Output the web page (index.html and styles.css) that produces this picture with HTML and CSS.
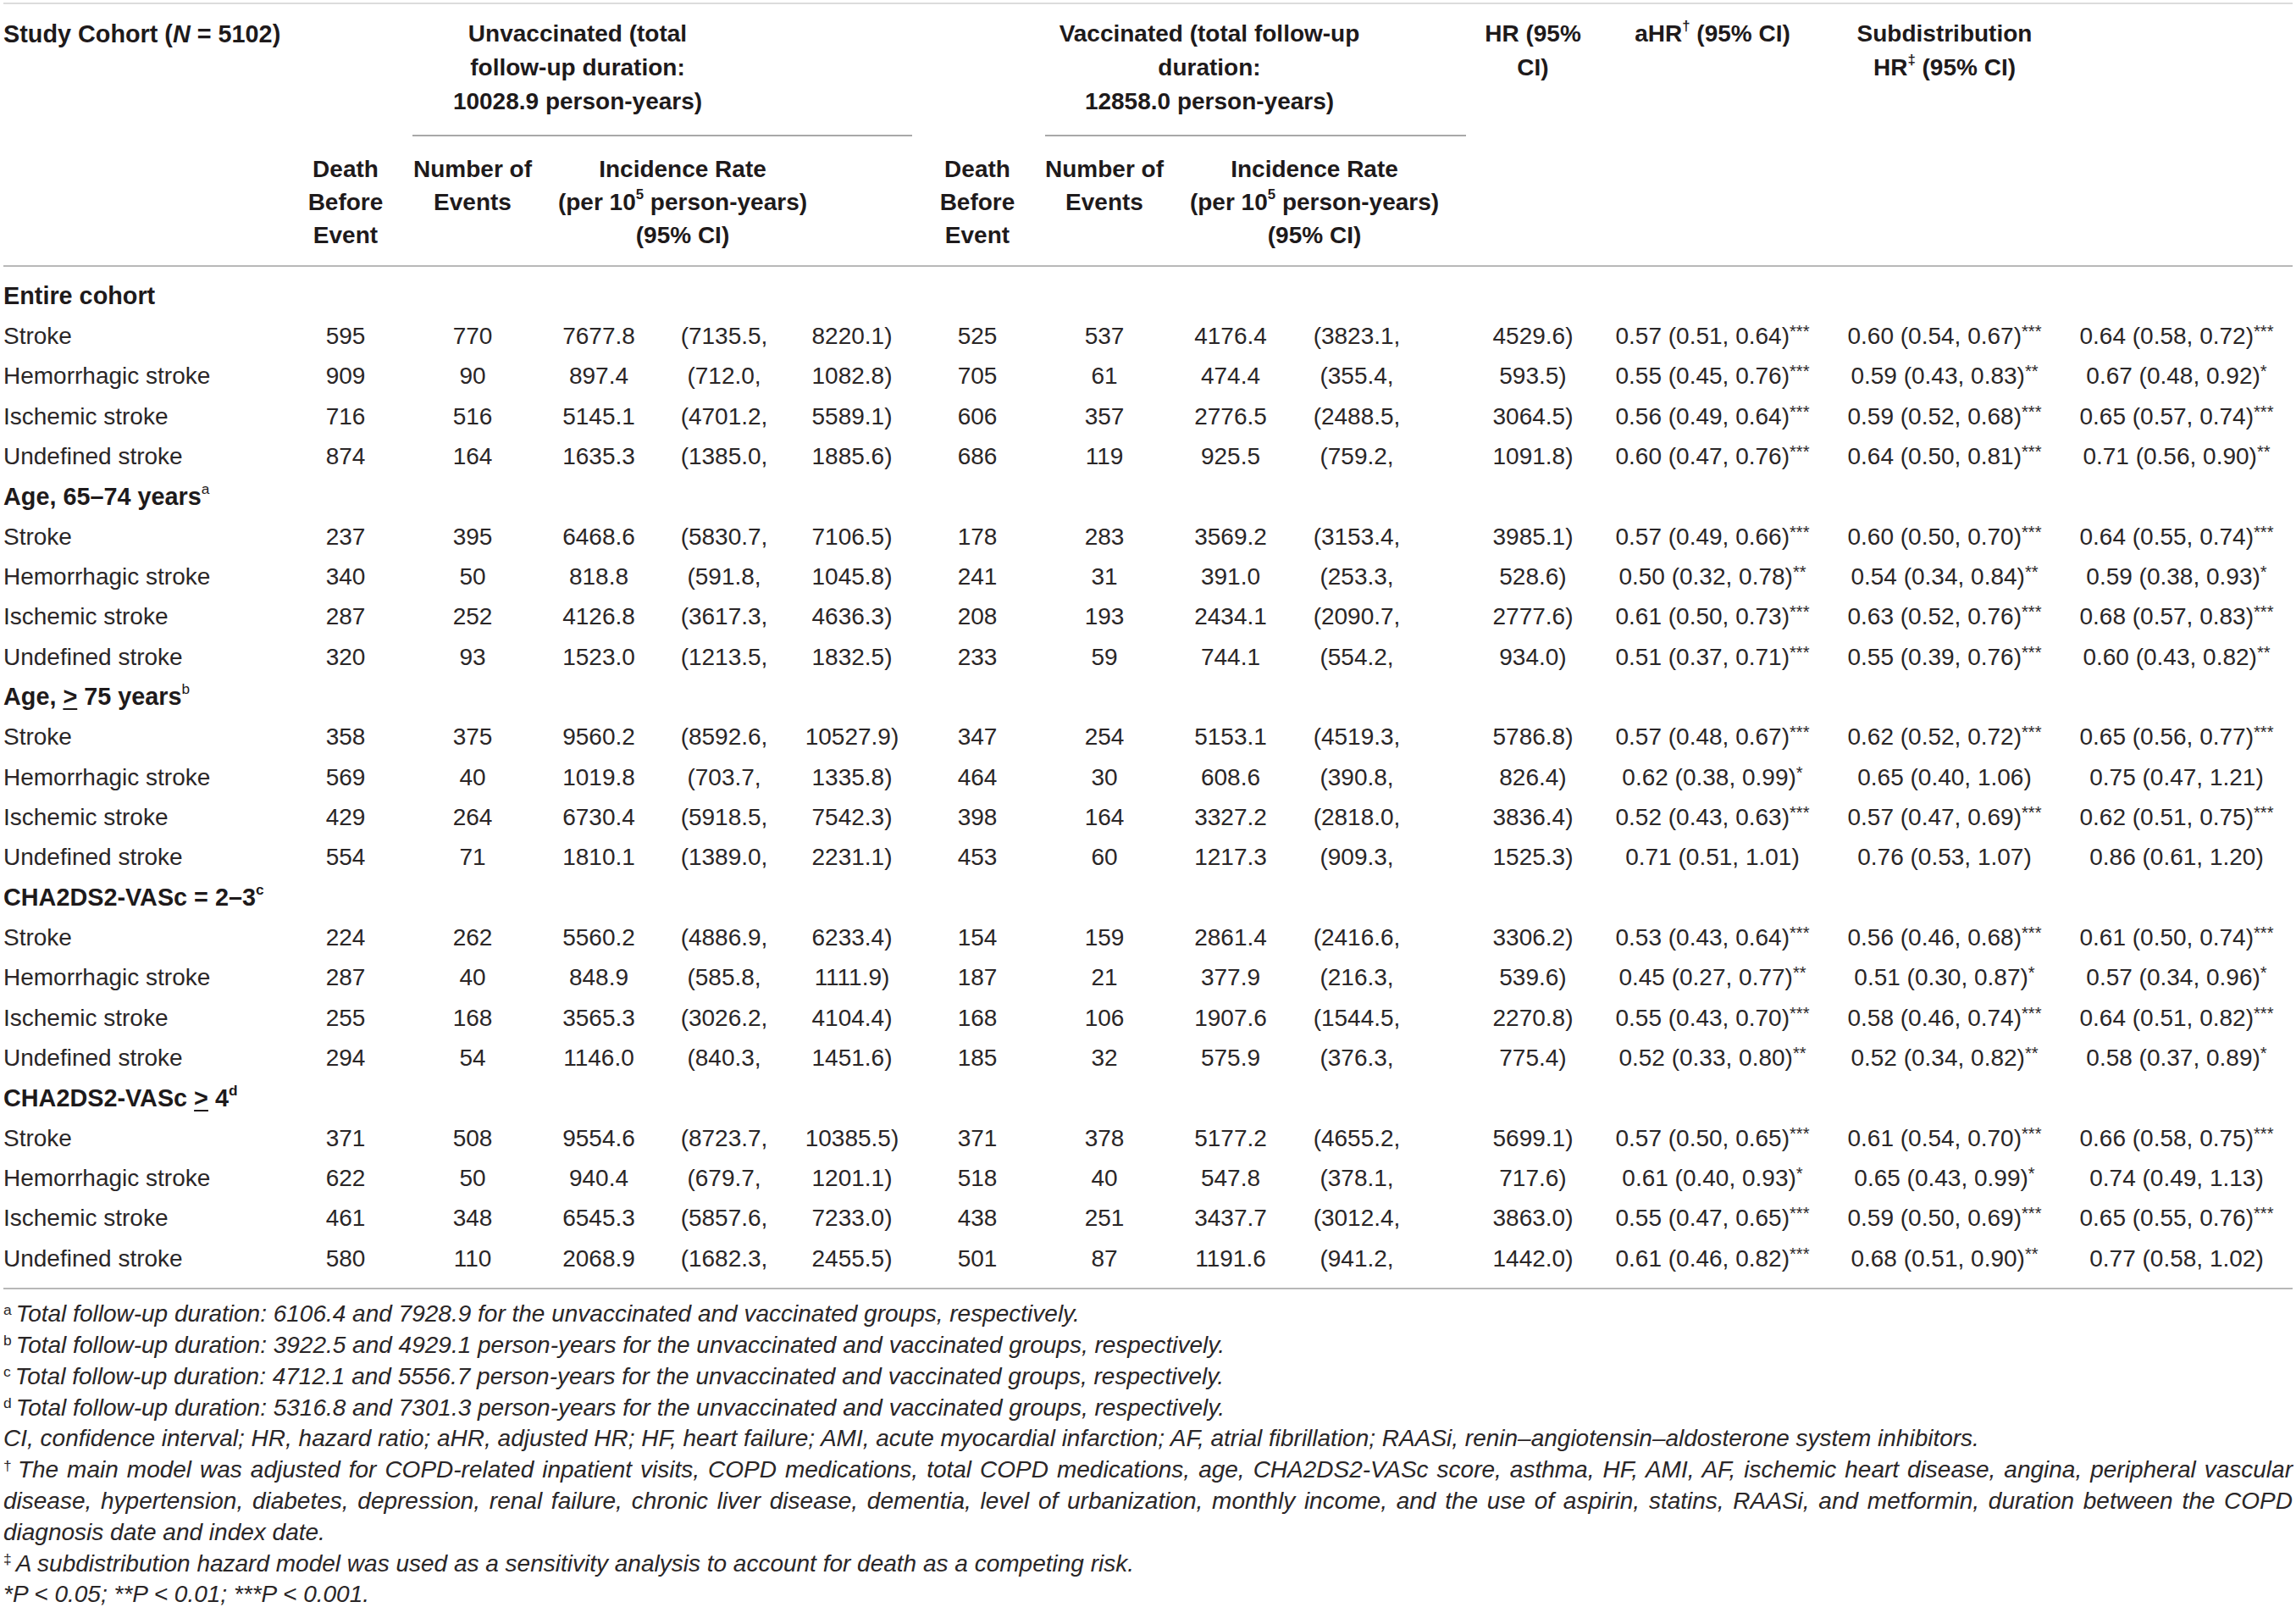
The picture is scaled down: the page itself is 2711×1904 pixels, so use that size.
FILE: index.html
```html
<!DOCTYPE html>
<html lang="en">
<head>
<meta charset="utf-8">
<title>Stroke incidence by influenza vaccination status</title>
<link rel="stylesheet" href="styles.css">
</head>
<body>
<div class="page">
  <div class="tbl">
    <div class="grid thead">
      <div class="h1 lab"><span>Study Cohort (<i>N</i> = 5102)</span></div>
      <div class="h1 u-head"><span>Unvaccinated (total<br>follow-up duration:<br>10028.9 person-years)</span></div>
      <div class="h1 v-head"><span>Vaccinated (total follow-up<br>duration:<br>12858.0 person-years)</span></div>
      <div class="h1 hr-head"><span>HR (95%<br>CI)</span></div>
      <div class="h1 ahr-head"><span>aHR<sup>†</sup> (95% CI)</span></div>
      <div class="h1 sub-head"><span>Subdistribution<br>HR<sup>‡</sup> (95% CI)</span></div>
      <div class="rule rule-u"></div>
      <div class="rule rule-v"></div>
      <div class="h2 du"><span>Death<br>Before<br>Event</span></div>
      <div class="h2 nu"><span>Number of<br>Events</span></div>
      <div class="h2 iru"><span>Incidence Rate<br>(per 10<sup>5</sup> person-years)<br>(95% CI)</span></div>
      <div class="h2 dv"><span>Death<br>Before<br>Event</span></div>
      <div class="h2 nv"><span>Number of<br>Events</span></div>
      <div class="h2 irv"><span>Incidence Rate<br>(per 10<sup>5</sup> person-years)<br>(95% CI)</span></div>
    </div>

    <div class="grid tbody">
      <div class="sec"><span>Entire cohort</span></div>
      <div class="c l">Stroke</div><div class="c">595</div><div class="c">770</div><div class="c">7677.8</div><div class="c">(7135.5,</div><div class="c">8220.1)</div><div class="c">525</div><div class="c">537</div><div class="c">4176.4</div><div class="c">(3823.1,</div><div class="c">4529.6)</div><div class="c"><span>0.57 (0.51, 0.64)<sup class="st">***</sup></span></div><div class="c"><span>0.60 (0.54, 0.67)<sup class="st">***</sup></span></div><div class="c"><span>0.64 (0.58, 0.72)<sup class="st">***</sup></span></div><div></div>
      <div class="c l">Hemorrhagic stroke</div><div class="c">909</div><div class="c">90</div><div class="c">897.4</div><div class="c">(712.0,</div><div class="c">1082.8)</div><div class="c">705</div><div class="c">61</div><div class="c">474.4</div><div class="c">(355.4,</div><div class="c">593.5)</div><div class="c"><span>0.55 (0.45, 0.76)<sup class="st">***</sup></span></div><div class="c"><span>0.59 (0.43, 0.83)<sup class="st">**</sup></span></div><div class="c"><span>0.67 (0.48, 0.92)<sup class="st">*</sup></span></div><div></div>
      <div class="c l">Ischemic stroke</div><div class="c">716</div><div class="c">516</div><div class="c">5145.1</div><div class="c">(4701.2,</div><div class="c">5589.1)</div><div class="c">606</div><div class="c">357</div><div class="c">2776.5</div><div class="c">(2488.5,</div><div class="c">3064.5)</div><div class="c"><span>0.56 (0.49, 0.64)<sup class="st">***</sup></span></div><div class="c"><span>0.59 (0.52, 0.68)<sup class="st">***</sup></span></div><div class="c"><span>0.65 (0.57, 0.74)<sup class="st">***</sup></span></div><div></div>
      <div class="c l">Undefined stroke</div><div class="c">874</div><div class="c">164</div><div class="c">1635.3</div><div class="c">(1385.0,</div><div class="c">1885.6)</div><div class="c">686</div><div class="c">119</div><div class="c">925.5</div><div class="c">(759.2,</div><div class="c">1091.8)</div><div class="c"><span>0.60 (0.47, 0.76)<sup class="st">***</sup></span></div><div class="c"><span>0.64 (0.50, 0.81)<sup class="st">***</sup></span></div><div class="c"><span>0.71 (0.56, 0.90)<sup class="st">**</sup></span></div><div></div>

      <div class="sec"><span>Age, 65–74 years<sup class="lt">a</sup></span></div>
      <div class="c l">Stroke</div><div class="c">237</div><div class="c">395</div><div class="c">6468.6</div><div class="c">(5830.7,</div><div class="c">7106.5)</div><div class="c">178</div><div class="c">283</div><div class="c">3569.2</div><div class="c">(3153.4,</div><div class="c">3985.1)</div><div class="c"><span>0.57 (0.49, 0.66)<sup class="st">***</sup></span></div><div class="c"><span>0.60 (0.50, 0.70)<sup class="st">***</sup></span></div><div class="c"><span>0.64 (0.55, 0.74)<sup class="st">***</sup></span></div><div></div>
      <div class="c l">Hemorrhagic stroke</div><div class="c">340</div><div class="c">50</div><div class="c">818.8</div><div class="c">(591.8,</div><div class="c">1045.8)</div><div class="c">241</div><div class="c">31</div><div class="c">391.0</div><div class="c">(253.3,</div><div class="c">528.6)</div><div class="c"><span>0.50 (0.32, 0.78)<sup class="st">**</sup></span></div><div class="c"><span>0.54 (0.34, 0.84)<sup class="st">**</sup></span></div><div class="c"><span>0.59 (0.38, 0.93)<sup class="st">*</sup></span></div><div></div>
      <div class="c l">Ischemic stroke</div><div class="c">287</div><div class="c">252</div><div class="c">4126.8</div><div class="c">(3617.3,</div><div class="c">4636.3)</div><div class="c">208</div><div class="c">193</div><div class="c">2434.1</div><div class="c">(2090.7,</div><div class="c">2777.6)</div><div class="c"><span>0.61 (0.50, 0.73)<sup class="st">***</sup></span></div><div class="c"><span>0.63 (0.52, 0.76)<sup class="st">***</sup></span></div><div class="c"><span>0.68 (0.57, 0.83)<sup class="st">***</sup></span></div><div></div>
      <div class="c l">Undefined stroke</div><div class="c">320</div><div class="c">93</div><div class="c">1523.0</div><div class="c">(1213.5,</div><div class="c">1832.5)</div><div class="c">233</div><div class="c">59</div><div class="c">744.1</div><div class="c">(554.2,</div><div class="c">934.0)</div><div class="c"><span>0.51 (0.37, 0.71)<sup class="st">***</sup></span></div><div class="c"><span>0.55 (0.39, 0.76)<sup class="st">***</sup></span></div><div class="c"><span>0.60 (0.43, 0.82)<sup class="st">**</sup></span></div><div></div>

      <div class="sec"><span>Age, <u>&gt;</u> 75 years<sup class="lt">b</sup></span></div>
      <div class="c l">Stroke</div><div class="c">358</div><div class="c">375</div><div class="c">9560.2</div><div class="c">(8592.6,</div><div class="c">10527.9)</div><div class="c">347</div><div class="c">254</div><div class="c">5153.1</div><div class="c">(4519.3,</div><div class="c">5786.8)</div><div class="c"><span>0.57 (0.48, 0.67)<sup class="st">***</sup></span></div><div class="c"><span>0.62 (0.52, 0.72)<sup class="st">***</sup></span></div><div class="c"><span>0.65 (0.56, 0.77)<sup class="st">***</sup></span></div><div></div>
      <div class="c l">Hemorrhagic stroke</div><div class="c">569</div><div class="c">40</div><div class="c">1019.8</div><div class="c">(703.7,</div><div class="c">1335.8)</div><div class="c">464</div><div class="c">30</div><div class="c">608.6</div><div class="c">(390.8,</div><div class="c">826.4)</div><div class="c"><span>0.62 (0.38, 0.99)<sup class="st">*</sup></span></div><div class="c">0.65 (0.40, 1.06)</div><div class="c">0.75 (0.47, 1.21)</div><div></div>
      <div class="c l">Ischemic stroke</div><div class="c">429</div><div class="c">264</div><div class="c">6730.4</div><div class="c">(5918.5,</div><div class="c">7542.3)</div><div class="c">398</div><div class="c">164</div><div class="c">3327.2</div><div class="c">(2818.0,</div><div class="c">3836.4)</div><div class="c"><span>0.52 (0.43, 0.63)<sup class="st">***</sup></span></div><div class="c"><span>0.57 (0.47, 0.69)<sup class="st">***</sup></span></div><div class="c"><span>0.62 (0.51, 0.75)<sup class="st">***</sup></span></div><div></div>
      <div class="c l">Undefined stroke</div><div class="c">554</div><div class="c">71</div><div class="c">1810.1</div><div class="c">(1389.0,</div><div class="c">2231.1)</div><div class="c">453</div><div class="c">60</div><div class="c">1217.3</div><div class="c">(909.3,</div><div class="c">1525.3)</div><div class="c">0.71 (0.51, 1.01)</div><div class="c">0.76 (0.53, 1.07)</div><div class="c">0.86 (0.61, 1.20)</div><div></div>

      <div class="sec"><span>CHA2DS2-VASc = 2–3<sup>c</sup></span></div>
      <div class="c l">Stroke</div><div class="c">224</div><div class="c">262</div><div class="c">5560.2</div><div class="c">(4886.9,</div><div class="c">6233.4)</div><div class="c">154</div><div class="c">159</div><div class="c">2861.4</div><div class="c">(2416.6,</div><div class="c">3306.2)</div><div class="c"><span>0.53 (0.43, 0.64)<sup class="st">***</sup></span></div><div class="c"><span>0.56 (0.46, 0.68)<sup class="st">***</sup></span></div><div class="c"><span>0.61 (0.50, 0.74)<sup class="st">***</sup></span></div><div></div>
      <div class="c l">Hemorrhagic stroke</div><div class="c">287</div><div class="c">40</div><div class="c">848.9</div><div class="c">(585.8,</div><div class="c">1111.9)</div><div class="c">187</div><div class="c">21</div><div class="c">377.9</div><div class="c">(216.3,</div><div class="c">539.6)</div><div class="c"><span>0.45 (0.27, 0.77)<sup class="st">**</sup></span></div><div class="c"><span>0.51 (0.30, 0.87)<sup class="st">*</sup></span></div><div class="c"><span>0.57 (0.34, 0.96)<sup class="st">*</sup></span></div><div></div>
      <div class="c l">Ischemic stroke</div><div class="c">255</div><div class="c">168</div><div class="c">3565.3</div><div class="c">(3026.2,</div><div class="c">4104.4)</div><div class="c">168</div><div class="c">106</div><div class="c">1907.6</div><div class="c">(1544.5,</div><div class="c">2270.8)</div><div class="c"><span>0.55 (0.43, 0.70)<sup class="st">***</sup></span></div><div class="c"><span>0.58 (0.46, 0.74)<sup class="st">***</sup></span></div><div class="c"><span>0.64 (0.51, 0.82)<sup class="st">***</sup></span></div><div></div>
      <div class="c l">Undefined stroke</div><div class="c">294</div><div class="c">54</div><div class="c">1146.0</div><div class="c">(840.3,</div><div class="c">1451.6)</div><div class="c">185</div><div class="c">32</div><div class="c">575.9</div><div class="c">(376.3,</div><div class="c">775.4)</div><div class="c"><span>0.52 (0.33, 0.80)<sup class="st">**</sup></span></div><div class="c"><span>0.52 (0.34, 0.82)<sup class="st">**</sup></span></div><div class="c"><span>0.58 (0.37, 0.89)<sup class="st">*</sup></span></div><div></div>

      <div class="sec"><span>CHA2DS2-VASc <u>&gt;</u> 4<sup>d</sup></span></div>
      <div class="c l">Stroke</div><div class="c">371</div><div class="c">508</div><div class="c">9554.6</div><div class="c">(8723.7,</div><div class="c">10385.5)</div><div class="c">371</div><div class="c">378</div><div class="c">5177.2</div><div class="c">(4655.2,</div><div class="c">5699.1)</div><div class="c"><span>0.57 (0.50, 0.65)<sup class="st">***</sup></span></div><div class="c"><span>0.61 (0.54, 0.70)<sup class="st">***</sup></span></div><div class="c"><span>0.66 (0.58, 0.75)<sup class="st">***</sup></span></div><div></div>
      <div class="c l">Hemorrhagic stroke</div><div class="c">622</div><div class="c">50</div><div class="c">940.4</div><div class="c">(679.7,</div><div class="c">1201.1)</div><div class="c">518</div><div class="c">40</div><div class="c">547.8</div><div class="c">(378.1,</div><div class="c">717.6)</div><div class="c"><span>0.61 (0.40, 0.93)<sup class="st">*</sup></span></div><div class="c"><span>0.65 (0.43, 0.99)<sup class="st">*</sup></span></div><div class="c">0.74 (0.49, 1.13)</div><div></div>
      <div class="c l">Ischemic stroke</div><div class="c">461</div><div class="c">348</div><div class="c">6545.3</div><div class="c">(5857.6,</div><div class="c">7233.0)</div><div class="c">438</div><div class="c">251</div><div class="c">3437.7</div><div class="c">(3012.4,</div><div class="c">3863.0)</div><div class="c"><span>0.55 (0.47, 0.65)<sup class="st">***</sup></span></div><div class="c"><span>0.59 (0.50, 0.69)<sup class="st">***</sup></span></div><div class="c"><span>0.65 (0.55, 0.76)<sup class="st">***</sup></span></div><div></div>
      <div class="c l">Undefined stroke</div><div class="c">580</div><div class="c">110</div><div class="c">2068.9</div><div class="c">(1682.3,</div><div class="c">2455.5)</div><div class="c">501</div><div class="c">87</div><div class="c">1191.6</div><div class="c">(941.2,</div><div class="c">1442.0)</div><div class="c"><span>0.61 (0.46, 0.82)<sup class="st">***</sup></span></div><div class="c"><span>0.68 (0.51, 0.90)<sup class="st">**</sup></span></div><div class="c">0.77 (0.58, 1.02)</div><div></div>
    </div>
  </div>

  <div class="notes">
    <p><sup>a</sup>Total follow-up duration: 6106.4 and 7928.9 for the unvaccinated and vaccinated groups, respectively.</p>
    <p><sup>b</sup>Total follow-up duration: 3922.5 and 4929.1 person-years for the unvaccinated and vaccinated groups, respectively.</p>
    <p><sup>c</sup>Total follow-up duration: 4712.1 and 5556.7 person-years for the unvaccinated and vaccinated groups, respectively.</p>
    <p><sup>d</sup>Total follow-up duration: 5316.8 and 7301.3 person-years for the unvaccinated and vaccinated groups, respectively.</p>
    <p>CI, confidence interval; HR, hazard ratio; aHR, adjusted HR; HF, heart failure; AMI, acute myocardial infarction; AF, atrial fibrillation; RAASi, renin–angiotensin–aldosterone system inhibitors.</p>
    <p class="just"><sup>†</sup>The main model was adjusted for COPD-related inpatient visits, COPD medications, total COPD medications, age, CHA2DS2-VASc score, asthma, HF, AMI, AF, ischemic heart disease, angina, peripheral vascular disease, hypertension, diabetes, depression, renal failure, chronic liver disease, dementia, level of urbanization, monthly income, and the use of aspirin, statins, RAASi, and metformin, duration between the COPD diagnosis date and index date.</p>
    <p><sup>‡</sup>A subdistribution hazard model was used as a sensitivity analysis to account for death as a competing risk.</p>
    <p>*P &lt; 0.05; **P &lt; 0.01; ***P &lt; 0.001.</p>
  </div>
</div>
</body>
</html>
```

FILE: styles.css
```css
html, body {
  margin: 0;
  padding: 0;
  background: #ffffff;
}

body {
  font-family: "Liberation Sans", Arial, Helvetica, sans-serif;
  font-size: 28px;
  color: #231f20;
}

.page {
  padding: 0 4px;
}

.tbl {
  margin-top: 3px;
  border-top: 2px solid #dcdcdc;
}

.grid {
  display: grid;
  grid-template-columns: 329px 150px 150px 148px 148px 154px 142px 158px 140px 158px 258px 166px 382px 166px 54px;
}

/* ---------- header ---------- */
.thead {
  grid-template-rows: auto 2px auto;
  border-bottom: 2px solid #b8b8b8;
  font-weight: bold;
  color: #1e1a1b;
}

.h1 {
  grid-row: 1;
  display: flex;
  justify-content: center;
  align-items: flex-start;
  text-align: center;
  white-space: nowrap;
  line-height: 40px;
  padding: 15px 0 19px;
}

.h1.lab {
  grid-column: 1 / 3;
  justify-content: flex-start;
  text-align: left;
  font-size: 28.8px;
}

.u-head { grid-column: 3 / 6; padding-right: 48px; }
.v-head { grid-column: 8 / 11; padding-right: 50px; }
.hr-head { grid-column: 11; }
.ahr-head { grid-column: 12; }
.sub-head { grid-column: 13; }

.rule {
  grid-row: 2;
  background: #a8a8a8;
}
.rule-u { grid-column: 3 / 7; margin: 0 6px 0 4px; }
.rule-v { grid-column: 8 / 12; margin: 0 208px 0 9px; }

.h2 {
  grid-row: 3;
  display: flex;
  justify-content: center;
  align-items: flex-start;
  text-align: center;
  white-space: nowrap;
  line-height: 39px;
  padding: 19px 0 16px;
}
.du { grid-column: 2; }
.nu { grid-column: 3; }
.iru { grid-column: 4 / 7; padding-right: 104px; }
.dv { grid-column: 7; }
.nv { grid-column: 8; }
.irv { grid-column: 9 / 11; padding-left: 40px; }

/* ---------- body ---------- */
.tbody {
  grid-auto-rows: 47.33px;
  padding: 11px 0 11px;
  border-bottom: 2px solid #b8b8b8;
  color: #2a2627;
}

.sec {
  grid-column: 1 / -1;
  display: flex;
  align-items: center;
  font-weight: bold;
  font-size: 28.8px;
  white-space: nowrap;
  color: #1e1a1b;
}

.c {
  display: flex;
  justify-content: center;
  align-items: center;
  white-space: nowrap;
}

.c.l {
  justify-content: flex-start;
}

sup {
  font-size: 0.6em;
  line-height: 0;
  vertical-align: 0.75em;
}

sup.st {
  font-size: 0.72em;
  vertical-align: 0.4em;
}

sup.lt {
  font-weight: normal;
}

u {
  text-decoration-thickness: 2px;
  text-underline-offset: 4px;
}

/* ---------- notes ---------- */
.notes {
  margin-top: 11px;
  font-style: italic;
  line-height: 36.8px;
  color: #2a2627;
}

.notes p {
  margin: 0;
}

.notes p.just {
  text-align: justify;
}

.notes sup {
  font-style: normal;
  font-size: 0.62em;
  vertical-align: 0.5em;
  margin-right: 5px;
}
```
